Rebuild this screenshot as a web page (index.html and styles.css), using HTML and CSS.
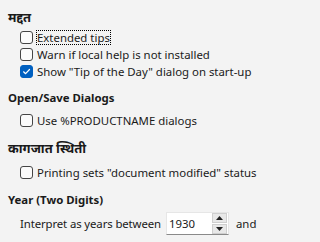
FILE: index.html
```html
<!DOCTYPE html>
<html>
<head>
<meta charset="utf-8">
<link rel="stylesheet" href="styles.css">
</head>
<body>
<div class="page">
  <section class="group g1">
    <h2 class="heading deva">मद्दत</h2>
    <div class="rows">
      <label class="row"><span class="box"></span><span class="text focus">Extended tips</span></label>
      <label class="row"><span class="box"></span><span class="text">Warn if local help is not installed</span></label>
      <label class="row"><span class="box checked"><svg viewBox="0 0 13 13" width="13" height="13"><path d="M3.6 6.8 L5.6 8.7 L9.5 4.5" fill="none" stroke="#fff" stroke-width="1.2" stroke-linecap="round" stroke-linejoin="round"/></svg></span><span class="text">Show "Tip of the Day" dialog on start-up</span></label>
    </div>
  </section>
  <section class="group g2">
    <h2 class="heading">Open/Save Dialogs</h2>
    <div class="rows">
      <label class="row"><span class="box"></span><span class="text">Use %PRODUCTNAME dialogs</span></label>
    </div>
  </section>
  <section class="group g3">
    <h2 class="heading deva">कागजात स्थिती</h2>
    <div class="rows">
      <label class="row"><span class="box"></span><span class="text">Printing sets "document modified" status</span></label>
    </div>
  </section>
  <section class="group g4">
    <h2 class="heading">Year (Two Digits)</h2>
    <div class="rows">
      <div class="year-row">
        <span class="text tight">Interpret as years between</span>
        <div class="spin">
          <span class="spin-value">1930</span>
          <div class="spin-buttons">
            <span class="spin-btn"><svg viewBox="0 0 7 4" width="7" height="4"><path d="M0 4 L3.5 0 L7 4Z" fill="#222"/></svg></span>
            <span class="spin-btn"><svg viewBox="0 0 7 4" width="7" height="4"><path d="M0 0 L3.5 4 L7 0Z" fill="#222"/></svg></span>
          </div>
        </div>
        <span class="text">and</span>
      </div>
    </div>
  </section>
</div>
</body>
</html>
```

FILE: styles.css
```css
html, body {
  margin: 0;
  padding: 0;
  background: #f3f3f3;
}
body {
  font-family: "Noto Sans", "Open Sans", sans-serif;
  font-size: 11.4px;
  color: #1a1a1a;
  width: 267px;
  height: 242px;
  overflow: hidden;
}
.page {
  padding: 8px 0 0 8px;
  display: flex;
  flex-direction: column;
}
.group {
  display: flex;
  flex-direction: column;
}
.g2 { margin-top: 9px; }
.g3 { margin-top: 10px; }
.g4 { margin-top: 10px; }
.heading {
  margin: 0;
  font-size: 11.4px;
  font-weight: bold;
  line-height: 18px;
  height: 18px;
  white-space: nowrap;
}
.heading.deva {
  font-size: 13px;
}
.rows {
  padding-left: 12px;
  display: flex;
  flex-direction: column;
}
.g1 .rows { margin-top: 3px; }
.g2 .rows { margin-top: 5px; }
.g3 .rows { margin-top: 7px; }
.g4 .rows { margin-top: 3px; }
.row {
  display: flex;
  align-items: center;
  height: 17px;
  gap: 4px;
}
.box {
  width: 11px;
  height: 11px;
  border: 1px solid #454545;
  border-radius: 3px;
  background: #fbfbfb;
  flex: none;
  display: flex;
}
.box.checked {
  background: #0060c0;
  border-color: #0060c0;
}
.box.checked svg {
  margin: -1px;
}
.text {
  white-space: nowrap;
  line-height: 15px;
}
.tight {
  letter-spacing: -0.12px;
}
.focus {
  outline: 1px dotted #000;
  outline-offset: -1px;
  padding: 0 1px;
  margin-left: -1px;
}
.year-row {
  display: flex;
  align-items: center;
  height: 23px;
}
.spin {
  margin-left: 5px;
  margin-right: 7px;
  width: 61px;
  height: 21px;
  background: #fff;
  border: 1px solid #e6e6e6;
  border-bottom-color: #8a8a8a;
  display: flex;
  align-items: center;
  justify-content: space-between;
}
.spin-value {
  padding-left: 2px;
}
.spin-buttons {
  display: flex;
  flex-direction: column;
  gap: 1px;
  margin-right: 1px;
}
.spin-btn {
  width: 13px;
  height: 8px;
  background: #e8e8e8;
  border: 1px solid #cfcfcf;
  display: flex;
  align-items: center;
  justify-content: center;
}
```
